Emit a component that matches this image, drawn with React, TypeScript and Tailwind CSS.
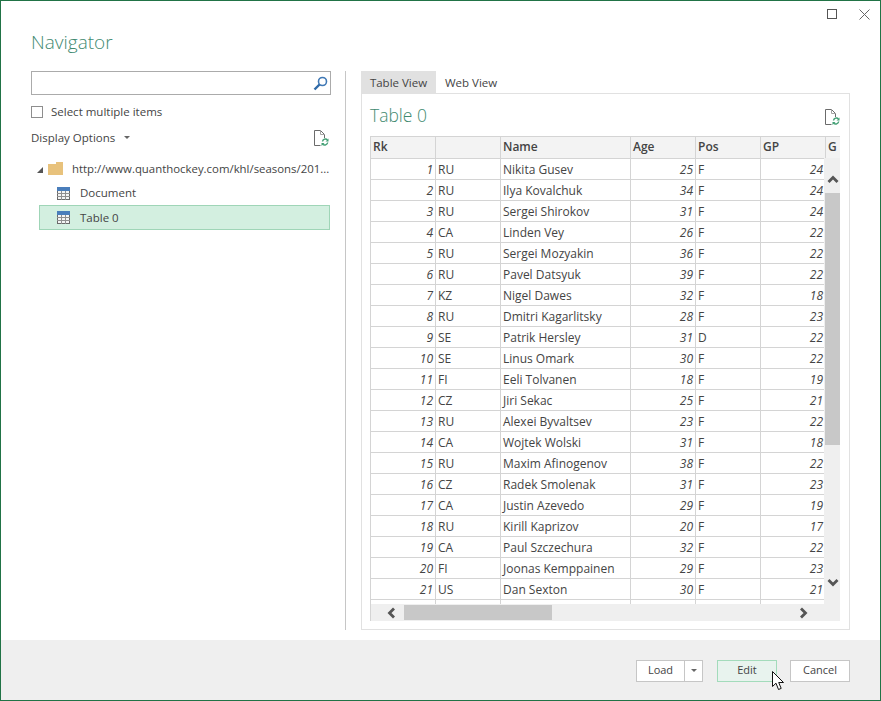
import { ReactNode } from "react";

const rows: [number, string, string, number, string, number][] = [
  [1, "RU", "Nikita Gusev", 25, "F", 24],
  [2, "RU", "Ilya Kovalchuk", 34, "F", 24],
  [3, "RU", "Sergei Shirokov", 31, "F", 24],
  [4, "CA", "Linden Vey", 26, "F", 22],
  [5, "RU", "Sergei Mozyakin", 36, "F", 22],
  [6, "RU", "Pavel Datsyuk", 39, "F", 22],
  [7, "KZ", "Nigel Dawes", 32, "F", 18],
  [8, "RU", "Dmitri Kagarlitsky", 28, "F", 23],
  [9, "SE", "Patrik Hersley", 31, "D", 22],
  [10, "SE", "Linus Omark", 30, "F", 22],
  [11, "FI", "Eeli Tolvanen", 18, "F", 19],
  [12, "CZ", "Jiri Sekac", 25, "F", 21],
  [13, "RU", "Alexei Byvaltsev", 23, "F", 22],
  [14, "CA", "Wojtek Wolski", 31, "F", 18],
  [15, "RU", "Maxim Afinogenov", 38, "F", 22],
  [16, "CZ", "Radek Smolenak", 31, "F", 23],
  [17, "CA", "Justin Azevedo", 29, "F", 19],
  [18, "RU", "Kirill Kaprizov", 20, "F", 17],
  [19, "CA", "Paul Szczechura", 32, "F", 22],
  [20, "FI", "Joonas Kemppainen", 29, "F", 23],
  [21, "US", "Dan Sexton", 30, "F", 21],
];

function TableIcon() {
  return (
    <svg width="13" height="13" viewBox="0 0 13 13" className="shrink-0">
      <rect x="0.5" y="0.5" width="12" height="12" fill="#f4f4f4" stroke="#6a6a6a" />
      <path d="M0 6.500h13M0 9.500h13M4.500 3v10M8.500 3v10" stroke="#8f8f8f" strokeWidth="1" />
      <rect x="0" y="0" width="13" height="4" fill="#4a7ebb" />
    </svg>
  );
}

function RefreshDocIcon() {
  return (
    <svg width="15" height="16" viewBox="0 0 15 16" className="shrink-0">
      <path d="M6.500 15.500H0.500V0.500H6.500L10.500 4.500V8" fill="none" stroke="#6b6b6b" />
      <path d="M6.500 0.500V4.500H10.500" fill="none" stroke="#a5a5a5" />
      <path d="M8.500 11.500a3 3 0 0 1 5-1.700M13.700 12.500a3 3 0 0 1-5 1.700" fill="none" stroke="#3f9e72" strokeWidth="1.400" />
      <path d="M14.500 8.500v3h-3zM7.500 16v-3h3z" fill="#3f9e72" />
    </svg>
  );
}

function Cell({ children, className = "" }: { children?: ReactNode; className?: string }) {
  return <div className={`h-[21px] truncate border-r border-b border-[#d4d4d4] leading-[22px] ${className}`}>{children}</div>;
}

function HeadCell({ children }: { children?: ReactNode }) {
  return <div className="h-[22px] border-r border-b border-[#d4d4d4] bg-[#f3f3f3] px-[2px] font-semibold leading-[20px] text-[#444]">{children}</div>;
}

function Chevron({ d, className }: { d: string; className: string }) {
  return (
    <svg width="12" height="12" viewBox="0 0 12 12" className={`absolute ${className}`}>
      <path d={d} fill="none" stroke="#555" strokeWidth="2.800" />
    </svg>
  );
}

export default function App() {
  return (
    <div
      className="flex h-[701px] w-[881px] flex-col border border-[#217346] bg-white text-[12px] text-[#444]"
      style={{ fontFamily: '"Open Sans", "Noto Sans", sans-serif' }}
    >
      <div className="flex h-[40px] shrink-0 justify-end pt-[8px] pr-[10px]">
        <div className="mr-[22px] h-[10px] w-[10px] border border-[#555]" />
        <svg width="11" height="11" viewBox="0 0 11 11">
          <path d="M0.500 0.500l10 10M10.500 0.500l-10 10" stroke="#666" strokeWidth="1" />
        </svg>
      </div>

      <div className="flex h-[599px] shrink-0">
        {/* left side */}
        <div className="w-[344px] shrink-0 pl-[30px] text-[11.5px]">
          <div className="h-[30px] text-[19px] font-light leading-[2px] text-[#3f8a70]">Navigator</div>
          <div className="flex h-[24px] w-[300px] items-center justify-end border border-[#ababab] pr-[2px]">
            <svg width="15" height="15" viewBox="0 0 15 15">
              <circle cx="9.500" cy="5.500" r="4" fill="none" stroke="#3f78b5" strokeWidth="1.600" />
              <path d="M6.500 8.500l-5 5" stroke="#2f6aa8" strokeWidth="2.400" />
            </svg>
          </div>
          <div className="mt-[10px] flex h-[13px] items-center gap-[8px]">
            <div className="h-[12px] w-[12px] border border-[#8e8e8e]" />
            <span>Select multiple items</span>
          </div>
          <div className="mt-[10px] flex h-[20px] w-[298px] items-center justify-between">
            <div className="flex items-center gap-[9px]">
              <span>Display Options</span>
              <span className="mb-[2px] h-0 w-0 border-x-[3px] border-t-[3px] border-x-transparent border-t-[#666]" />
            </div>
            <RefreshDocIcon />
          </div>
          <div className="mt-[8px] flex h-[25px] items-center pl-[6px]">
            <span className="mt-[2px] h-0 w-0 border-b-[6px] border-l-[6px] border-b-[#555] border-l-transparent" />
            <svg width="15" height="13" viewBox="0 0 15 13" className="ml-[5px] shrink-0">
              <path d="M0 2h8V0h7v13H0z" fill="#e8c27c" />
            </svg>
            <span className="ml-[9px] text-[11.4px] whitespace-nowrap">http://www.quanthockey.com/khl/seasons/201...</span>
          </div>
          <div className="flex h-[24px] items-center gap-[10px] pl-[26px]">
            <TableIcon />
            <span>Document</span>
          </div>
          <div className="ml-[8px] flex h-[25px] w-[291px] items-center gap-[10px] border border-[#9fd5b7] bg-[#d3efe0] pl-[17px]">
            <TableIcon />
            <span>Table 0</span>
          </div>
        </div>

        {/* right side */}
        <div className="mt-[30px] flex h-[559px] flex-1 border-l border-[#c6c6c6] pl-[15px]">
          <div className="flex w-[489px] flex-col">
            <div className="flex h-[22px] shrink-0 items-center text-[11.5px]">
              <div className="flex h-full w-[75px] items-center justify-center bg-[#e1e1e1] pt-[1px]">Table View</div>
              <div className="ml-[9px] pt-[2px]">Web View</div>
            </div>
            <div className="flex flex-1 flex-col border border-[#e1e1e1] pt-[8px] pl-[8px]">
              <div className="flex h-[34px] w-[470px] shrink-0 items-start justify-between">
                <span className="text-[17.500px] font-light leading-[26px] text-[#3f8a70]">Table 0</span>
                <div className="mt-[7px]">
                  <RefreshDocIcon />
                </div>
              </div>
              <div className="relative h-[485px] w-[470px] overflow-hidden border-t border-l border-[#d4d4d4]">
                <div className="grid w-[480px] grid-cols-[65px_65px_130px_65px_65px_65px_25px]">
                  {["Rk", "", "Name", "Age", "Pos", "GP", "G"].map((h, i) => (
                    <HeadCell key={i}>{h}</HeadCell>
                  ))}
                  {rows.map((r) => (
                    <div key={r[0]} className="contents">
                      <Cell className="pr-[2px] text-right italic">{r[0]}</Cell>
                      <Cell className="px-[2px]">{r[1]}</Cell>
                      <Cell className="px-[2px]">{r[2]}</Cell>
                      <Cell className="pr-[2px] text-right italic">{r[3]}</Cell>
                      <Cell className="px-[2px]">{r[4]}</Cell>
                      <Cell className="pr-[2px] text-right italic">{r[5]}</Cell>
                      <Cell />
                    </div>
                  ))}
                  {[0, 1, 2, 3, 4, 5, 6].map((i) => (
                    <Cell key={i} />
                  ))}
                </div>
                {/* scrollbars lie over the grid */}
                <div className="absolute top-[21px] right-0 h-[446px] w-[16px] bg-[#efefef]">
                  <Chevron d="M1.500 8L6 3.500 10.500 8" className="top-[16px] left-[3px]" />
                  <div className="absolute top-[35px] left-[1px] h-[252px] w-[15px] bg-[#c8c8c8]" />
                  <Chevron d="M1.500 4L6 8.500 10.500 4" className="top-[418px] left-[3px]" />
                </div>
                <div className="absolute right-0 bottom-0 left-0 h-[17px] bg-[#efefef]">
                  <Chevron d="M8 1.500L3.500 6 8 10.500" className="top-[3px] left-[15px]" />
                  <div className="absolute top-[1px] left-[33px] h-[15px] w-[148px] bg-[#c8c8c8]" />
                  <Chevron d="M4 1.500L8.500 6 4 10.500" className="top-[3px] left-[426px]" />
                </div>
              </div>
            </div>
          </div>
        </div>
      </div>

      <div className="relative flex flex-1 items-center justify-end gap-[13px] bg-[#efefef] pt-[1px] pr-[30px] text-[11px]">
        <div className="mr-[1px] flex h-[22px] w-[67px] border border-[#c6c6c6] bg-white">
          <div className="flex flex-1 items-center justify-center border-r border-[#c6c6c6]">Load</div>
          <div className="flex w-[17px] items-center justify-center">
            <span className="h-0 w-0 border-x-[3px] border-t-[3px] border-x-transparent border-t-[#666]" />
          </div>
        </div>
        <div className="flex h-[22px] w-[60px] items-center justify-center border border-[#a3dbbb] bg-[#e8f3ee]">Edit</div>
        <div className="flex h-[22px] w-[60px] items-center justify-center border border-[#c6c6c6] bg-white">Cancel</div>
        <svg width="13" height="20" viewBox="0 0 13 20" className="absolute top-[31px] left-[771px]">
          <path d="M0.500 0.500V15.500L4 12.200L6.500 18.500L9.200 17.400L6.700 11.500H11.500Z" fill="#fff" stroke="#111" />
        </svg>
      </div>
    </div>
  );
}
